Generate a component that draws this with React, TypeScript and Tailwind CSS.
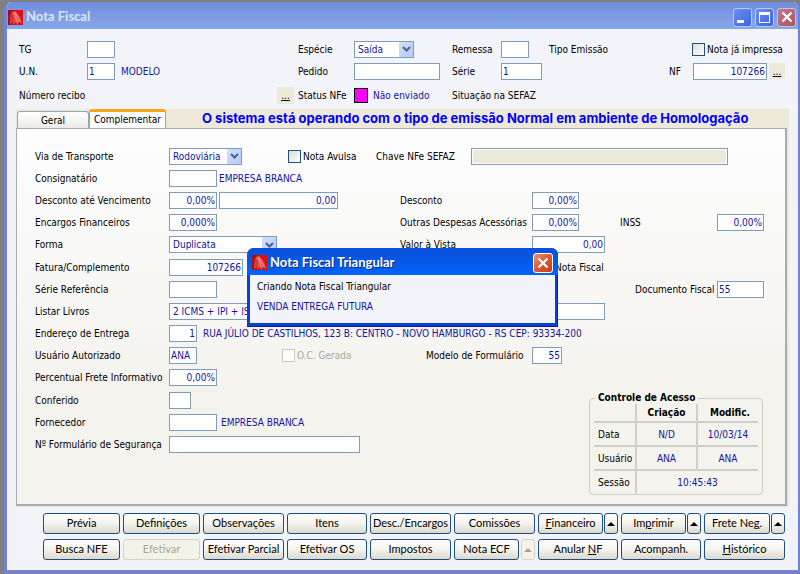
import type { ReactNode } from "react";
import { clsx } from "clsx";

interface FieldProps {
  id: string;
  label?: string;
  value?: string;
  className?: string;
  readOnly?: boolean;
}

interface RowProps {
  label: string;
  htmlFor: string;
  children: ReactNode;
}

interface ActionProps {
  children: ReactNode;
  disabled?: boolean;
  label?: string;
  className?: string;
}

const Field = ({ id, label, value = "", className, readOnly }: FieldProps) => (
  <input
    id={id}
    aria-label={label}
    defaultValue={value}
    readOnly={readOnly}
    className={clsx(
      "h-[17px] shrink-0 border border-[#7f9db9] px-px text-[#1414a0] outline-none",
      readOnly ? "bg-[#ece9d8]" : "bg-white",
      className
    )}
  />
);

const Select = ({ id, label, value, className }: FieldProps) => (
  <div className={clsx("relative h-[17px] shrink-0", className)}>
    <select
      id={id}
      aria-label={label}
      className="block h-full w-full appearance-none border border-[#7f9db9] bg-white pr-4 pl-[3px] text-[#1414a0] outline-none"
    >
      <option>{value}</option>
    </select>
    <span className="pointer-events-none absolute top-px right-px flex h-[15px] w-[14px] items-center justify-center rounded-[1px] bg-linear-to-br from-[#d3e0fd] to-[#b3c9f8]">
      <svg width="9" height="6" viewBox="0 0 9 6" fill="none" stroke="#4d6185" strokeWidth="2">
        <path d="M1 1l3.5 3.5L8 1" />
      </svg>
    </span>
  </div>
);

const Checkbox = ({ id, label, disabled }: { id: string; label: string; disabled?: boolean }) => (
  <div className="flex shrink-0 items-center gap-[2px]">
    <input
      id={id}
      type="checkbox"
      disabled={disabled}
      className={clsx(
        "h-[13px] w-[13px] appearance-none border",
        disabled ? "border-[#cac8bb] bg-white" : "border-[#1d5281] bg-linear-to-br from-[#dcdcd7] to-white"
      )}
    />
    <label htmlFor={id} className={clsx(disabled && "text-[#aca899]")}>
      {label}
    </label>
  </div>
);

const Row = ({ label, htmlFor, children }: RowProps) => (
  <div className="flex flex-1 items-center">
    <label htmlFor={htmlFor} className="w-[134px] shrink-0">
      {label}
    </label>
    {children}
  </div>
);

const Action = ({ children, disabled, label, className = "flex-1" }: ActionProps) => (
  <button
    type="button"
    disabled={disabled}
    aria-label={label}
    className={clsx(
      "flex h-[21px] items-center justify-center rounded-[3px] border font-['Lato',sans-serif] text-[11px]",
      disabled
        ? "border-[#d5d2c0] bg-[#f4f3ea] text-[#a8a696]"
        : "border-[#1f4f80] bg-linear-to-b from-white via-[#f4f3ee] to-[#dcd9cc] text-black",
      className
    )}
  >
    {children}
  </button>
);

const UpArrow = () => (
  <svg width="8" height="4" viewBox="0 0 8 4" fill="currentColor">
    <path d="M4 0l4 4H0z" />
  </svg>
);

const AppIcon = () => (
  <svg width="15" height="15" viewBox="0 0 15 15" className="shrink-0">
    <rect width="15" height="15" fill="#d00c14" />
    <path d="M0 0h5L2 5v10H0z" fill="#a01216" />
    <path d="M9 0h6v15h-2C13 9 12 4 9 0z" fill="#e80c14" />
    <path d="M4 2l3-1c3 2 6 6 7 13l-3-2-1 3-3-3-1 3-2-3-2 2C2 9 2 5 4 2z" fill="#e4504c" />
    <path d="M6 2c3 3 4 6 6 10M6 3c2 3 2 6 3 9" fill="none" stroke="#f7a8a2" strokeWidth="0.8" />
    <path d="M4 4c-1 3-1 6-1 8M5 5v8" fill="none" stroke="#b0181c" strokeWidth="0.7" />
  </svg>
);

const CloseGlyph = () => (
  <svg width="12" height="12" viewBox="0 0 12 12" stroke="white" strokeWidth="2.2">
    <path d="M1.500 1.500l9 9M10.500 1.500l-9 9" />
  </svg>
);

const TitleBar = () => (
  <header className="flex h-[27px] items-center bg-linear-to-b from-[#6f8ddc] via-[#7e9be3] to-[#84a8ea] pt-[3px] pr-[2px] pl-px">
    <AppIcon />
    <h1 className="flex-1 pl-[3px] font-['Lato',sans-serif] text-[13px] font-bold text-[#dbe4f8]">Nota Fiscal</h1>
    <div className="flex gap-[3px] text-white">
      <button
        type="button"
        aria-label="Minimizar"
        className="flex h-[19px] w-[19px] items-end rounded-[3px] border border-[#b7c8f4] bg-linear-to-br from-[#6d8ff0] to-[#3a66dc] p-[3px]"
      >
        <span className="h-[3px] w-[7px] bg-white" />
      </button>
      <button
        type="button"
        aria-label="Maximizar"
        className="flex h-[19px] w-[19px] items-center justify-center rounded-[3px] border border-[#b7c8f4] bg-linear-to-br from-[#6d8ff0] to-[#3a66dc]"
      >
        <span className="h-[11px] w-[11px] border border-t-[3px] border-white" />
      </button>
      <button
        type="button"
        aria-label="Fechar"
        className="flex h-[19px] w-[19px] items-center justify-center rounded-[3px] border border-[#cfc0dc] bg-linear-to-br from-[#c07a8c] to-[#a85563]"
      >
        <CloseGlyph />
      </button>
    </div>
  </header>
);

const InvoiceHeader = () => (
  <section className="pt-[9px] pl-3">
    <div className="flex h-[22px] items-center">
      <div className="flex w-[279px] shrink-0 items-center">
        <label htmlFor="tg" className="w-[68px]">TG</label>
        <Field id="tg" className="w-7" />
      </div>
      <div className="flex w-[154px] shrink-0 items-center">
        <label htmlFor="especie" className="w-14">Espécie</label>
        <Select id="especie" value="Saída" className="w-[60px]" />
      </div>
      <div className="flex w-[97px] shrink-0 items-center">
        <label htmlFor="remessa" className="w-[49px]">Remessa</label>
        <Field id="remessa" className="w-7" />
      </div>
      <span className="flex-1">Tipo Emissão</span>
      <div className="w-[106px]">
        <Checkbox id="impressa" label="Nota já impressa" />
      </div>
    </div>
    <div className="flex h-[22px] items-center">
      <div className="flex w-[279px] shrink-0 items-center">
        <label htmlFor="un" className="w-[68px]">U.N.</label>
        <Field id="un" value="1" className="w-7" />
        <span className="pl-[6px] text-[#1414a0]">MODELO</span>
      </div>
      <div className="flex w-[154px] shrink-0 items-center">
        <label htmlFor="pedido" className="w-14">Pedido</label>
        <Field id="pedido" className="w-[86px]" />
      </div>
      <div className="flex flex-1 items-center">
        <label htmlFor="serie" className="w-[49px]">Série</label>
        <Field id="serie" value="1" className="w-[41px]" />
      </div>
      <div className="flex w-[129px] items-center">
        <label htmlFor="nf" className="w-6">NF</label>
        <Field id="nf" value="107266" className="w-[74px] text-right" />
        <button type="button" aria-label="Buscar NF" className="ml-[2px] flex h-4 w-4 items-center justify-center bg-[#ece9d8] underline">
          ...
        </button>
      </div>
    </div>
    <div className="flex h-[27px] items-center">
      <span className="w-[258px] shrink-0">Número recibo</span>
      <button type="button" aria-label="Buscar recibo" className="flex h-[17px] w-[17px] items-center justify-center bg-[#ece9d8] underline">
        ...
      </button>
      <span className="w-[60px] shrink-0 pl-1">Status NFe</span>
      <span className="h-[15px] w-[14px] border border-black bg-[#ff00ff]" />
      <span className="w-[84px] shrink-0 pl-[5px] text-[#1414a0]">Não enviado</span>
      <span>Situação na SEFAZ</span>
    </div>
  </section>
);

const Tabs = () => (
  <div className="flex h-[19px] items-end">
    <div role="tablist" className="flex h-full shrink-0 items-end">
      <button
        type="button"
        role="tab"
        aria-selected="false"
        className="ml-px h-[17px] w-[72px] rounded-t-[3px] border border-b-0 border-[#91a7b4] bg-linear-to-b from-white to-[#ecebe6]"
      >
        Geral
      </button>
      <button
        type="button"
        role="tab"
        aria-selected="true"
        className="h-full w-[77px] rounded-t-[3px] border-x border-t-[3px] border-x-[#91a7b4] border-t-[#f9a61a] bg-[#fcfcfe] pb-[2px]"
      >
        Complementar
      </button>
    </div>
    <p className="flex h-full flex-1 items-center pt-px pl-9 font-['Inter',sans-serif] text-[13px] font-bold text-[#0000ff]">
      O sistema está operando com o tipo de emissão Normal em ambiente de Homologação
    </p>
  </div>
);

const AccessControl = () => (
  <fieldset className="mt-[3px] mr-px w-[174px] rounded-[4px] border border-[#d0d0bf] px-1">
    <legend className="ml-px px-[3px] leading-3 font-bold">Controle de Acesso</legend>
    <table className="w-full table-fixed border-collapse text-center">
      <thead>
        <tr className="h-[18px] border-b-2 border-[#d0cfc8]">
          <td className="w-[42px] border-r-2 border-[#d0cfc8]" />
          <th className="border-r-2 border-[#d0cfc8]">Criação</th>
          <th className="pl-1">Modific.</th>
        </tr>
      </thead>
      <tbody className="text-[#1414a0]">
        <tr className="h-6 border-b-2 border-[#d0cfc8]">
          <th className="border-r-2 border-[#d0cfc8] pl-1 text-left font-normal text-black">Data</th>
          <td className="border-r-2 border-[#d0cfc8]">N/D</td>
          <td>10/03/14</td>
        </tr>
        <tr className="h-6 border-b-2 border-[#d0cfc8]">
          <th className="border-r-2 border-[#d0cfc8] pl-1 text-left font-normal text-black">Usuário</th>
          <td className="border-r-2 border-[#d0cfc8]">ANA</td>
          <td>ANA</td>
        </tr>
        <tr className="h-6">
          <th className="border-r-2 border-[#d0cfc8] pl-1 text-left font-normal text-black">Sessão</th>
          <td colSpan={2}>10:45:43</td>
        </tr>
      </tbody>
    </table>
  </fieldset>
);

const ComplementaryPanel = () => (
  <div className="border-2 border-t border-l border-[#a3adb3] bg-linear-to-b from-[#fdfdfe] via-[#f4f3ee] via-70% to-[#f4f3ee] pt-4 pr-[21px] pb-[9px] pl-[18px]">
    <div className="flex min-h-[244px] flex-col">
      <Row label="Via de Transporte" htmlFor="via">
        <Select id="via" value="Rodoviária" className="w-[73px]" />
        <div className="w-[134px] shrink-0 pl-[46px]">
          <Checkbox id="avulsa" label="Nota Avulsa" />
        </div>
        <label htmlFor="chave" className="w-[95px] shrink-0">Chave NFe SEFAZ</label>
        <Field id="chave" readOnly className="mr-9 min-w-0 flex-1 shadow-[inset_0_0_0_1px_white]" />
      </Row>
      <Row label="Consignatário" htmlFor="consignatario">
        <Field id="consignatario" className="w-12" />
        <span className="pl-[2px] text-[#1414a0]">EMPRESA BRANCA</span>
      </Row>
      <Row label="Desconto até Vencimento" htmlFor="vencimento">
        <Field id="vencimento" value="0,00%" className="w-12 text-right" />
        <Field id="vencimento-valor" label="Valor do desconto" value="0,00" className="ml-[2px] w-[119px] text-right" />
        <label htmlFor="desconto" className="ml-[62px] w-[132px] shrink-0">Desconto</label>
        <Field id="desconto" value="0,00%" className="w-[47px] text-right" />
      </Row>
      <Row label="Encargos Financeiros" htmlFor="encargos">
        <Field id="encargos" value="0,000%" className="w-12 text-right" />
        <label htmlFor="despesas" className="ml-[183px] w-[132px] shrink-0">Outras Despesas Acessórias</label>
        <Field id="despesas" value="0,00%" className="w-[47px] text-right" />
        <label htmlFor="inss" className="ml-auto w-[97px]">INSS</label>
        <Field id="inss" value="0,00%" className="w-[47px] text-right" />
      </Row>
      <Row label="Forma" htmlFor="forma">
        <Select id="forma" value="Duplicata" className="w-[108px]" />
        <label htmlFor="vista" className="ml-[123px] w-[132px] shrink-0">Valor à Vista</label>
        <Field id="vista" value="0,00" className="w-[73px] text-right" />
      </Row>
      <Row label="Fatura/Complemento" htmlFor="fatura">
        <Field id="fatura" value="107266" className="w-[74px] text-right" />
        <div className="ml-[297px]">
          <Checkbox id="nota-fiscal" label="Nota Fiscal" />
        </div>
      </Row>
      <Row label="Série Referência" htmlFor="referencia">
        <Field id="referencia" className="w-12" />
        <label htmlFor="documento" className="ml-auto w-[82px]">Documento Fiscal</label>
        <Field id="documento" value="55" className="w-[47px]" />
      </Row>
      <Row label="Listar Livros" htmlFor="livros">
        <Select id="livros" value="2 ICMS + IPI + ISS" className="w-[200px]" />
        <Field id="livros-valor" label="Livros" className="ml-[163px] w-[73px]" />
      </Row>
      <Row label="Endereço de Entrega" htmlFor="entrega">
        <Field id="entrega" value="1" className="w-7 text-right" />
        <span className="pl-[6px] text-[#1414a0]">
          RUA JÚLIO DE CASTILHOS, 123 B: CENTRO - NOVO HAMBURGO - RS CEP: 93334-200
        </span>
      </Row>
      <Row label="Usuário Autorizado" htmlFor="usuario">
        <Field id="usuario" value="ANA" className="w-7" />
        <div className="w-[229px] shrink-0 pl-[85px]">
          <Checkbox id="oc" label="O.C. Gerada" disabled />
        </div>
        <label htmlFor="modelo" className="w-[106px] shrink-0">Modelo de Formulário</label>
        <Field id="modelo" value="55" className="w-[30px] text-right" />
      </Row>
      <Row label="Percentual Frete Informativo" htmlFor="frete">
        <Field id="frete" value="0,00%" className="w-12 text-right" />
      </Row>
    </div>
    <div className="flex items-start justify-between">
      <div className="flex min-h-[67px] flex-col">
        <Row label="Conferido" htmlFor="conferido">
          <Field id="conferido" className="w-[22px]" />
        </Row>
        <Row label="Fornecedor" htmlFor="fornecedor">
          <Field id="fornecedor" className="w-12" />
          <span className="pl-1 text-[#1414a0]">EMPRESA BRANCA</span>
        </Row>
        <Row label="Nº Formulário de Segurança" htmlFor="seguranca">
          <Field id="seguranca" className="w-[191px]" />
        </Row>
      </div>
      <AccessControl />
    </div>
  </div>
);

const ActionBar = () => (
  <footer className="grid grid-cols-[77fr_77fr_81fr_80fr_81fr_81fr_80fr_80fr_81fr] gap-x-[3px] gap-y-[5px] pt-[6px] pr-[13px] pb-[10px] pl-9">
    <Action>Prévia</Action>
    <Action>Definições</Action>
    <Action>Observações</Action>
    <Action>Itens</Action>
    <Action>Desc./Encargos</Action>
    <Action>Comissões</Action>
    <div className="flex gap-px">
      <Action><u>F</u>inanceiro</Action>
      <Action label="Mais opções de Financeiro" className="w-[14px]"><UpArrow /></Action>
    </div>
    <div className="flex gap-px">
      <Action>Im<u>p</u>rimir</Action>
      <Action label="Mais opções de Imprimir" className="w-[14px]"><UpArrow /></Action>
    </div>
    <div className="flex gap-px">
      <Action>Frete Ne<u>g</u>.</Action>
      <Action label="Mais opções de Frete" className="w-[14px]"><UpArrow /></Action>
    </div>
    <Action>Busca NFE</Action>
    <Action disabled>Efetivar</Action>
    <Action>Efetivar Parcial</Action>
    <Action>Efetivar OS</Action>
    <Action>Impostos</Action>
    <div className="flex gap-[2px]">
      <Action>Nota ECF</Action>
      <Action label="Mais opções de Nota ECF" disabled className="w-[14px]"><UpArrow /></Action>
    </div>
    <Action>Anular&nbsp;<u>N</u>F</Action>
    <Action>Acompanh.</Action>
    <Action><u>H</u>istórico</Action>
  </footer>
);

const TriangularDialog = () => (
  <div
    role="dialog"
    aria-labelledby="dialog-title"
    className="absolute top-[248px] left-[247px] w-[311px] rounded-t-[7px] bg-[#0a3fd8] px-[3px] pb-[4px] shadow-[inset_-1px_-1px_0_#0a1f9c]"
  >
    <div className="-mx-[3px] flex h-[27px] items-center rounded-t-[7px] bg-linear-to-b from-[#0a50dd] via-[#0558e6] to-[#0264fb] pt-[2px] pr-[5px] pl-[5px]">
      <AppIcon />
      <h2
        id="dialog-title"
        className="flex-1 pl-[3px] font-['Lato',sans-serif] text-[13px] font-bold text-white [text-shadow:1px_1px_#0a2a8c]"
      >
        Nota Fiscal Triangular
      </h2>
      <button
        type="button"
        aria-label="Fechar"
        className="flex h-5 w-5 items-center justify-center rounded-[3px] border border-white bg-linear-to-br from-[#f0927a] via-[#dd5631] to-[#c93c12]"
      >
        <CloseGlyph />
      </button>
    </div>
    <div className="flex h-12 flex-col gap-1 bg-[#f3f4fa] pt-1 pl-[7px] leading-4">
      <p>Criando Nota Fiscal Triangular</p>
      <p className="text-[#1414a0]">VENDA ENTREGA FUTURA</p>
    </div>
  </div>
);

const App = () => (
  <div className="relative min-w-[800px] bg-[#808080] pt-[2px] pb-px pl-1 font-['DejaVu_Sans_Condensed','DejaVu_Sans',sans-serif] text-[10px] whitespace-nowrap text-black">
    <main className="overflow-hidden rounded-t-[7px] border-r-2 border-b-[3px] border-l-[3px] border-[#6f83dc] bg-[#f3f4fa]">
      <TitleBar />
      <InvoiceHeader />
      <section className="mr-[9px] ml-[9px] bg-[#ece9d8] pr-[2px] pb-px">
        <Tabs />
        <ComplementaryPanel />
      </section>
      <ActionBar />
    </main>
    <TriangularDialog />
  </div>
);

export default App;
